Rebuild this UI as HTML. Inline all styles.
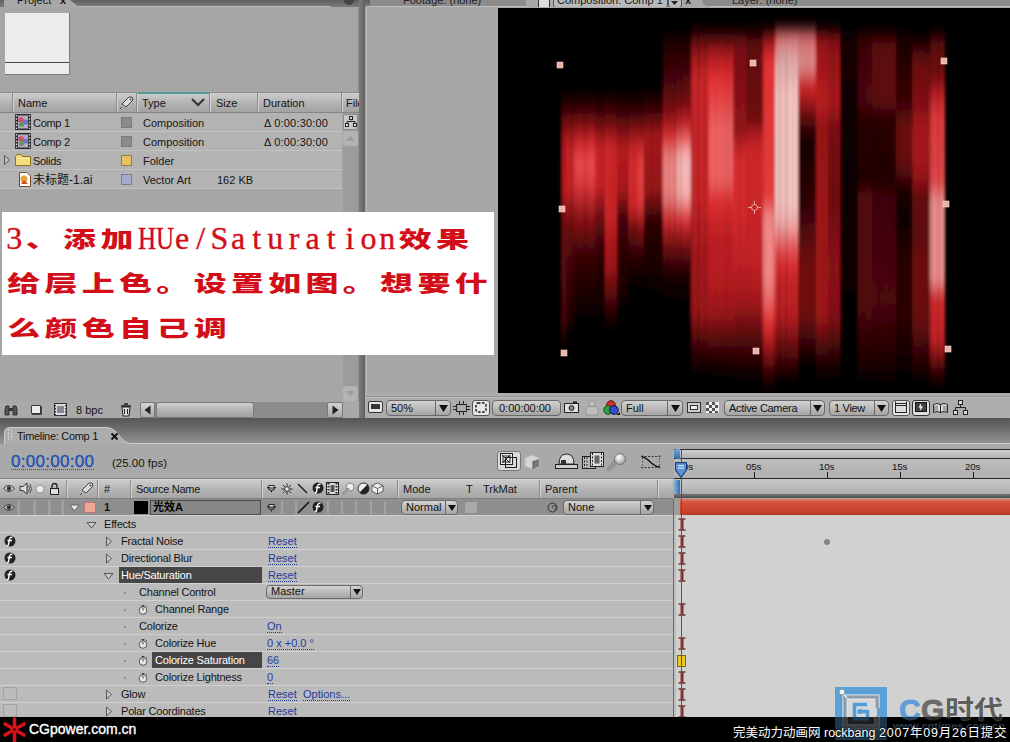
<!DOCTYPE html>
<html><head><meta charset="utf-8"><title>AE</title>
<style>
html,body{margin:0;padding:0;}
body{width:1010px;height:742px;overflow:hidden;position:relative;background:#a6a6a6;font-family:"Liberation Sans","Noto Sans CJK SC",sans-serif;font-size:11px;color:#111;}
.a{position:absolute;}
.t{position:absolute;white-space:nowrap;line-height:14px;font-size:11px;color:#151515;}
.lnk{color:#1a3fa8;border-bottom:1px dotted #1a3fa8;line-height:12px;}
.row{position:absolute;left:0;width:676px;height:16px;background:#b7b7b7;border-bottom:1px solid #a2a2a2;}
</style></head><body>


<!-- ===== top tab strip ===== -->
<div class="a" style="left:0;top:0;width:1010px;height:7px;background:linear-gradient(#606060,#7c7c7c);"></div>
<div class="a" style="left:4px;top:0;width:66px;height:7px;background:#a8a8a8;overflow:hidden;"><span class="t" style="left:13px;top:-7px;font-size:11px;">Project</span><span class="t" style="left:56px;top:-7px;font-weight:bold;">x</span></div>
<div class="a" style="left:70px;top:0;width:0;height:0;border-top:7px solid transparent;border-left:9px solid #a8a8a8;"></div>
<div class="a" style="left:78px;top:6px;width:252px;height:1px;background:#bdbdbd;"></div>
<div class="a" style="left:344px;top:-5px;width:10px;height:10px;border-radius:5px;background:#444;"></div>

<!-- ===== project panel ===== -->
<div class="a" id="proj" style="left:0;top:7px;width:359px;height:412px;background:#a6a6a6;"></div>
<div class="a" style="left:359px;top:0;width:6px;height:425px;background:linear-gradient(90deg,#7c7c7c,#626262);"></div>
<div class="a" style="left:358px;top:8px;width:1px;height:411px;background:#8e8e8e;"></div>

<!-- thumbnail -->
<div class="a" style="left:5px;top:13px;width:65px;height:62px;background:#ececec;border-right:1px solid #7d7d7d;border-bottom:1px solid #7d7d7d;box-sizing:border-box;"></div>
<div class="a" style="left:5px;top:62px;width:64px;height:1px;background:#4a4a4a;"></div>

<!-- header row -->
<div class="a" id="phead" style="left:0;top:92px;width:359px;height:21px;background:linear-gradient(#cdcdcd,#b0b0b0 60%,#a3a3a3);border-top:1px solid #8f8f8f;border-bottom:1px solid #858585;box-sizing:border-box;"></div>
<div class="a" style="left:12px;top:93px;width:1px;height:19px;background:#8a8a8a;"></div><div class="a" style="left:13px;top:93px;width:1px;height:19px;background:#d2d2d2;"></div>
<div class="a" style="left:116px;top:93px;width:1px;height:19px;background:#8a8a8a;"></div><div class="a" style="left:117px;top:93px;width:1px;height:19px;background:#d2d2d2;"></div>
<div class="a" style="left:136px;top:93px;width:1px;height:19px;background:#8a8a8a;"></div><div class="a" style="left:137px;top:93px;width:1px;height:19px;background:#d2d2d2;"></div>
<div class="a" style="left:138px;top:92px;width:72px;height:2px;background:#4f9a96;"></div>
<div class="a" style="left:209px;top:93px;width:1px;height:19px;background:#8a8a8a;"></div><div class="a" style="left:210px;top:93px;width:1px;height:19px;background:#d2d2d2;"></div>
<div class="a" style="left:257px;top:93px;width:1px;height:19px;background:#8a8a8a;"></div><div class="a" style="left:258px;top:93px;width:1px;height:19px;background:#d2d2d2;"></div>
<div class="a" style="left:341px;top:93px;width:1px;height:19px;background:#8a8a8a;"></div><div class="a" style="left:342px;top:93px;width:1px;height:19px;background:#d2d2d2;"></div>
<span class="t" style="left:18px;top:96px;">Name</span>
<span class="t" style="left:142px;top:96px;">Type</span>
<span class="t" style="left:216px;top:96px;">Size</span>
<span class="t" style="left:263px;top:96px;">Duration</span>
<span class="t" style="left:346px;top:96px;width:13px;overflow:hidden;">File</span>
<svg class="a" style="left:190px;top:97px" width="16" height="10" viewBox="0 0 16 10"><path d="M2 2 L8 8 L14 2" fill="none" stroke="#333" stroke-width="2"/></svg>
<svg class="a" style="left:119px;top:94px" width="17" height="17" viewBox="0 0 17 17"><path d="M3 10 L10 3 L13 3 L14 6 L7 13 Z" fill="#ddd" stroke="#444" stroke-width="1"/><circle cx="11.500" cy="5.500" r="1" fill="#444"/><path d="M3 13 L1 15" stroke="#444"/></svg>

<!-- rows -->
<div class="a" style="left:0;top:113px;width:342px;height:76px;background:#b3b3b3;"></div>
<div class="a" style="left:0;top:131px;width:342px;height:1px;background:#c3c3c3;"></div>
<div class="a" style="left:0;top:150px;width:342px;height:1px;background:#c3c3c3;"></div>
<div class="a" style="left:0;top:169px;width:342px;height:1px;background:#c3c3c3;"></div>
<div class="a" style="left:0;top:188px;width:342px;height:1px;background:#c3c3c3;"></div>
<!-- comp icons -->
<svg class="a" style="left:15px;top:114px" width="16" height="16" viewBox="0 0 16 16"><rect x="0" y="0" width="16" height="16" fill="#2c2c2c"/><rect x="3" y="1.500" width="10" height="13" fill="#b9a9c6"/><circle cx="6" cy="6" r="2.800" fill="#d0506a"/><circle cx="10.500" cy="8" r="2.600" fill="#6a78c8"/><circle cx="6.500" cy="10.500" r="2.500" fill="#5a9a58"/><path d="M1.500 1v14M14.500 1v14" stroke="#d8d8d8" stroke-width="1.400" stroke-dasharray="1.600 1.600"/></svg>
<svg class="a" style="left:15px;top:133px" width="16" height="16" viewBox="0 0 16 16"><rect x="0" y="0" width="16" height="16" fill="#2c2c2c"/><rect x="3" y="1.500" width="10" height="13" fill="#b9a9c6"/><circle cx="6" cy="6" r="2.800" fill="#d0506a"/><circle cx="10.500" cy="8" r="2.600" fill="#6a78c8"/><circle cx="6.500" cy="10.500" r="2.500" fill="#5a9a58"/><path d="M1.500 1v14M14.500 1v14" stroke="#d8d8d8" stroke-width="1.400" stroke-dasharray="1.600 1.600"/></svg>
<svg class="a" style="left:3px;top:154px" width="8" height="12" viewBox="0 0 8 12"><path d="M1.500 1.500 L6.500 6 L1.500 10.500 Z" fill="#c4c4c4" stroke="#555"/></svg>
<svg class="a" style="left:15px;top:153px" width="16" height="14" viewBox="0 0 16 14"><path d="M0.500 3.500 L2 1.500 L6 1.500 L7.500 3.500 L15.500 3.500 L15.500 12.500 L0.500 12.500 Z" fill="#f3dc7a" stroke="#8a7420"/><path d="M1.500 5.500 H14.500" stroke="#fbf0b0"/></svg>
<svg class="a" style="left:17px;top:171px" width="15" height="17" viewBox="0 0 15 17"><path d="M2.500 1.500 H10 L13.500 5 V15.500 H2.500 Z" fill="#fff" stroke="#7a4a20"/><circle cx="7" cy="8" r="3.500" fill="#e8a040"/><path d="M4 13 L7 9 L11 13Z" fill="#c8501c"/></svg>
<span class="t" style="left:33px;top:116px;letter-spacing:-0.3px;">Comp 1</span>
<span class="t" style="left:33px;top:135px;letter-spacing:-0.3px;">Comp 2</span>
<span class="t" style="left:33px;top:154px;letter-spacing:-0.3px;">Solids</span>
<span class="t" style="left:33px;top:173px;font-size:12px;">未标题-1.ai</span>
<div class="a" style="left:121px;top:117px;width:11px;height:11px;background:#8a8a8a;border:1px solid #7a7a7a;box-sizing:border-box;"></div>
<div class="a" style="left:121px;top:136px;width:11px;height:11px;background:#8a8a8a;border:1px solid #7a7a7a;box-sizing:border-box;"></div>
<div class="a" style="left:121px;top:155px;width:11px;height:11px;background:#e8c060;border:1px solid #8f7d4a;box-sizing:border-box;"></div>
<div class="a" style="left:121px;top:174px;width:11px;height:11px;background:#a8aacc;border:1px solid #7c7e96;box-sizing:border-box;"></div>
<span class="t" style="left:143px;top:116px;">Composition</span>
<span class="t" style="left:143px;top:135px;">Composition</span>
<span class="t" style="left:143px;top:154px;">Folder</span>
<span class="t" style="left:143px;top:173px;">Vector Art</span>
<span class="t" style="left:217px;top:173px;">162 KB</span>
<span class="t" style="left:264px;top:116px;letter-spacing:0.2px;">Δ 0:00:30:00</span>
<span class="t" style="left:264px;top:135px;letter-spacing:0.2px;">Δ 0:00:30:00</span>
<!-- vertical scrollbar of project -->
<div class="a" style="left:343px;top:113px;width:15px;height:288px;background:#9c9c9c;"></div>
<div class="a" style="left:343px;top:114px;width:15px;height:16px;background:#c9c9c9;border:1px solid #8a8a8a;box-sizing:border-box;border-radius:2px;"></div>
<svg class="a" style="left:345px;top:116px" width="12" height="12" viewBox="0 0 12 12"><path d="M6 1.500v3M2 8V5.500h8V8" fill="none" stroke="#222"/><rect x="4.500" y="0.500" width="3" height="3" fill="#ddd" stroke="#222"/><rect x="0.500" y="7.500" width="3" height="3" fill="#ddd" stroke="#222"/><rect x="8.500" y="7.500" width="3" height="3" fill="#ddd" stroke="#222"/></svg>
<div class="a" style="left:343px;top:131px;width:15px;height:15px;background:#b3b3b3;border-radius:2px;"></div>
<svg class="a" style="left:346px;top:135px" width="9" height="7" viewBox="0 0 9 7"><path d="M0.500 6 L4.500 0.500 L8.500 6 Z" fill="#9d9d9d"/></svg>
<div class="a" style="left:343px;top:386px;width:15px;height:15px;background:#b3b3b3;border-radius:2px;"></div>
<svg class="a" style="left:346px;top:390px" width="9" height="7" viewBox="0 0 9 7"><path d="M0.500 1 L4.500 6.500 L8.500 1 Z" fill="#9d9d9d"/></svg>

<!-- project footer -->
<div class="a" style="left:0;top:401px;width:359px;height:18px;background:#a9a9a9;"></div>
<svg class="a" style="left:4px;top:403px" width="14" height="14" viewBox="0 0 14 14"><path d="M2 3h3v9H1V6zM9 3h3l1 3v6H9z" fill="#555" stroke="#222" stroke-width="0.800"/><rect x="5" y="5" width="4" height="3" fill="#333"/></svg>
<div class="a" style="left:31px;top:405px;width:10px;height:9px;background:#eee;border:1px solid #333;border-radius:1px;box-sizing:border-box;box-shadow:1px 1px 0 #444;"></div>
<svg class="a" style="left:54px;top:403px" width="13" height="13" viewBox="0 0 13 13"><rect x="0.500" y="0.500" width="12" height="12" fill="#ddd" stroke="#333"/><rect x="3" y="3" width="7" height="7" fill="#889"/><path d="M1.500 2v10M11.500 2v10" stroke="#333" stroke-dasharray="1.500 1.500"/></svg>
<span class="t" style="left:76px;top:403px;">8 bpc</span>
<svg class="a" style="left:120px;top:402px" width="12" height="15" viewBox="0 0 12 15"><path d="M2 5h8l-1 9H3z" fill="#ddd" stroke="#222"/><path d="M1 4h10M4 2h4" stroke="#222" stroke-width="1.500"/><path d="M4.500 7v5M7.500 7v5" stroke="#222"/></svg>
<div class="a" style="left:140px;top:402px;width:203px;height:16px;background:#8c8c8c;border-radius:2px;"></div>
<div class="a" style="left:140px;top:402px;width:15px;height:16px;background:linear-gradient(#d4d4d4,#aaa);border:1px solid #777;box-sizing:border-box;border-radius:2px;"></div>
<div class="a" style="left:327px;top:402px;width:16px;height:16px;background:linear-gradient(#d4d4d4,#aaa);border:1px solid #777;box-sizing:border-box;border-radius:2px;"></div>
<div class="a" style="left:156px;top:402px;width:98px;height:16px;background:linear-gradient(#d0d0d0,#b4b4b4 50%,#a2a2a2);border:1px solid #7c7c7c;box-sizing:border-box;border-radius:3px;"></div>
<svg class="a" style="left:143px;top:405px" width="9" height="10" viewBox="0 0 9 10"><path d="M7.500 0.500 L1.500 5 L7.500 9.500 Z" fill="#222"/></svg>
<svg class="a" style="left:331px;top:405px" width="9" height="10" viewBox="0 0 9 10"><path d="M1.500 0.500 L7.500 5 L1.500 9.500 Z" fill="#222"/></svg>

<!-- ===== comp panel ===== -->
<div class="a" id="compgray" style="left:365px;top:8px;width:645px;height:411px;background:#a7a7a7;"></div>
<div class="a" style="left:366px;top:8px;width:1px;height:411px;background:#b5b5b5;"></div>
<div class="a" style="left:365px;top:393px;width:645px;height:25px;background:#adadad;"></div><div class="a" style="left:365px;top:396px;width:645px;height:1px;background:#969696;"></div><div class="a" style="left:365px;top:397px;width:645px;height:1px;background:#bcbcbc;"></div>
<!--VIEWER_S-->
<svg class="a" id="viewer" style="left:498px;top:8px" width="512" height="385" viewBox="498 8 512 385">
<defs><filter id="bx" x="-5%" y="-5%" width="110%" height="110%"><feGaussianBlur stdDeviation="1.5 7"/></filter>
<linearGradient id="g0" x1="0" y1="92" x2="0" y2="350" gradientUnits="userSpaceOnUse"><stop offset="0.000" stop-color="rgb(0,0,0)"/><stop offset="0.070" stop-color="rgb(58,4,6)"/><stop offset="0.140" stop-color="rgb(125,14,18)"/><stop offset="0.205" stop-color="rgb(169,24,28)"/><stop offset="0.380" stop-color="rgb(180,26,30)"/><stop offset="0.516" stop-color="rgb(98,10,13)"/><stop offset="0.884" stop-color="rgb(71,6,8)"/><stop offset="1.000" stop-color="rgb(0,0,0)"/></linearGradient>
<linearGradient id="g1" x1="0" y1="92" x2="0" y2="335" gradientUnits="userSpaceOnUse"><stop offset="0.000" stop-color="rgb(0,0,0)"/><stop offset="0.074" stop-color="rgb(58,4,6)"/><stop offset="0.148" stop-color="rgb(136,16,20)"/><stop offset="0.230" stop-color="rgb(198,35,38)"/><stop offset="0.403" stop-color="rgb(198,35,38)"/><stop offset="0.547" stop-color="rgb(112,12,16)"/><stop offset="0.691" stop-color="rgb(71,6,8)"/><stop offset="0.922" stop-color="rgb(35,2,4)"/><stop offset="1.000" stop-color="rgb(0,0,0)"/></linearGradient>
<linearGradient id="g2" x1="0" y1="90" x2="0" y2="320" gradientUnits="userSpaceOnUse"><stop offset="0.000" stop-color="rgb(0,0,0)"/><stop offset="0.087" stop-color="rgb(58,4,6)"/><stop offset="0.165" stop-color="rgb(147,19,23)"/><stop offset="0.252" stop-color="rgb(226,48,50)"/><stop offset="0.313" stop-color="rgb(232,78,79)"/><stop offset="0.396" stop-color="rgb(228,60,62)"/><stop offset="0.570" stop-color="rgb(136,16,20)"/><stop offset="0.717" stop-color="rgb(58,4,6)"/><stop offset="0.913" stop-color="rgb(23,2,2)"/><stop offset="1.000" stop-color="rgb(0,0,0)"/></linearGradient>
<linearGradient id="g3" x1="0" y1="90" x2="0" y2="320" gradientUnits="userSpaceOnUse"><stop offset="0.000" stop-color="rgb(0,0,0)"/><stop offset="0.087" stop-color="rgb(46,3,5)"/><stop offset="0.165" stop-color="rgb(125,14,18)"/><stop offset="0.252" stop-color="rgb(198,35,38)"/><stop offset="0.413" stop-color="rgb(198,35,38)"/><stop offset="0.570" stop-color="rgb(98,10,13)"/><stop offset="0.717" stop-color="rgb(46,3,5)"/><stop offset="0.913" stop-color="rgb(19,1,2)"/><stop offset="1.000" stop-color="rgb(0,0,0)"/></linearGradient>
<linearGradient id="g4" x1="0" y1="90" x2="0" y2="330" gradientUnits="userSpaceOnUse"><stop offset="0.000" stop-color="rgb(0,0,0)"/><stop offset="0.083" stop-color="rgb(58,4,6)"/><stop offset="0.158" stop-color="rgb(136,16,20)"/><stop offset="0.233" stop-color="rgb(208,39,42)"/><stop offset="0.521" stop-color="rgb(208,39,42)"/><stop offset="0.625" stop-color="rgb(180,26,30)"/><stop offset="0.746" stop-color="rgb(158,21,25)"/><stop offset="0.883" stop-color="rgb(71,6,8)"/><stop offset="1.000" stop-color="rgb(0,0,0)"/></linearGradient>
<linearGradient id="g5" x1="0" y1="90" x2="0" y2="310" gradientUnits="userSpaceOnUse"><stop offset="0.000" stop-color="rgb(0,0,0)"/><stop offset="0.091" stop-color="rgb(46,3,5)"/><stop offset="0.173" stop-color="rgb(112,12,16)"/><stop offset="0.264" stop-color="rgb(180,26,30)"/><stop offset="0.455" stop-color="rgb(169,24,28)"/><stop offset="0.568" stop-color="rgb(71,6,8)"/><stop offset="0.727" stop-color="rgb(46,3,5)"/><stop offset="0.909" stop-color="rgb(28,2,3)"/><stop offset="1.000" stop-color="rgb(0,0,0)"/></linearGradient>
<linearGradient id="g6" x1="0" y1="90" x2="0" y2="290" gradientUnits="userSpaceOnUse"><stop offset="0.000" stop-color="rgb(0,0,0)"/><stop offset="0.100" stop-color="rgb(46,3,5)"/><stop offset="0.190" stop-color="rgb(125,14,18)"/><stop offset="0.280" stop-color="rgb(198,35,38)"/><stop offset="0.370" stop-color="rgb(217,44,46)"/><stop offset="0.590" stop-color="rgb(208,39,42)"/><stop offset="0.675" stop-color="rgb(125,14,18)"/><stop offset="0.825" stop-color="rgb(46,3,5)"/><stop offset="1.000" stop-color="rgb(0,0,0)"/></linearGradient>
<linearGradient id="g7" x1="0" y1="90" x2="0" y2="290" gradientUnits="userSpaceOnUse"><stop offset="0.000" stop-color="rgb(0,0,0)"/><stop offset="0.100" stop-color="rgb(46,3,5)"/><stop offset="0.190" stop-color="rgb(125,14,18)"/><stop offset="0.280" stop-color="rgb(208,39,42)"/><stop offset="0.375" stop-color="rgb(230,68,69)"/><stop offset="0.575" stop-color="rgb(228,60,62)"/><stop offset="0.675" stop-color="rgb(147,19,23)"/><stop offset="0.825" stop-color="rgb(46,3,5)"/><stop offset="1.000" stop-color="rgb(0,0,0)"/></linearGradient>
<linearGradient id="g8" x1="0" y1="88" x2="0" y2="300" gradientUnits="userSpaceOnUse"><stop offset="0.000" stop-color="rgb(0,0,0)"/><stop offset="0.104" stop-color="rgb(58,4,6)"/><stop offset="0.222" stop-color="rgb(169,24,28)"/><stop offset="0.481" stop-color="rgb(156,21,25)"/><stop offset="0.627" stop-color="rgb(46,3,5)"/><stop offset="0.811" stop-color="rgb(28,2,3)"/><stop offset="1.000" stop-color="rgb(0,0,0)"/></linearGradient>
<linearGradient id="g9" x1="0" y1="30" x2="0" y2="320" gradientUnits="userSpaceOnUse"><stop offset="0.000" stop-color="rgb(0,0,0)"/><stop offset="0.052" stop-color="rgb(35,2,4)"/><stop offset="0.172" stop-color="rgb(71,6,8)"/><stop offset="0.259" stop-color="rgb(112,12,16)"/><stop offset="0.317" stop-color="rgb(169,24,28)"/><stop offset="0.369" stop-color="rgb(226,48,50)"/><stop offset="0.438" stop-color="rgb(241,134,133)"/><stop offset="0.569" stop-color="rgb(241,134,133)"/><stop offset="0.659" stop-color="rgb(208,39,42)"/><stop offset="0.776" stop-color="rgb(85,8,11)"/><stop offset="0.869" stop-color="rgb(12,1,1)"/><stop offset="1.000" stop-color="rgb(0,0,0)"/></linearGradient>
<linearGradient id="g10" x1="0" y1="30" x2="0" y2="320" gradientUnits="userSpaceOnUse"><stop offset="0.000" stop-color="rgb(0,0,0)"/><stop offset="0.052" stop-color="rgb(35,2,4)"/><stop offset="0.172" stop-color="rgb(77,7,9)"/><stop offset="0.259" stop-color="rgb(125,14,18)"/><stop offset="0.317" stop-color="rgb(189,30,34)"/><stop offset="0.369" stop-color="rgb(233,85,86)"/><stop offset="0.438" stop-color="rgb(247,185,183)"/><stop offset="0.569" stop-color="rgb(247,178,175)"/><stop offset="0.659" stop-color="rgb(217,44,46)"/><stop offset="0.776" stop-color="rgb(85,8,11)"/><stop offset="0.869" stop-color="rgb(12,1,1)"/><stop offset="1.000" stop-color="rgb(0,0,0)"/></linearGradient>
<linearGradient id="g11" x1="0" y1="26" x2="0" y2="374" gradientUnits="userSpaceOnUse"><stop offset="0.000" stop-color="rgb(0,0,0)"/><stop offset="0.078" stop-color="rgb(158,21,25)"/><stop offset="0.152" stop-color="rgb(208,39,42)"/><stop offset="0.500" stop-color="rgb(204,37,40)"/><stop offset="0.647" stop-color="rgb(169,24,28)"/><stop offset="0.830" stop-color="rgb(158,21,25)"/><stop offset="0.911" stop-color="rgb(71,6,8)"/><stop offset="1.000" stop-color="rgb(0,0,0)"/></linearGradient>
<linearGradient id="g12" x1="0" y1="28" x2="0" y2="378" gradientUnits="userSpaceOnUse"><stop offset="0.000" stop-color="rgb(0,0,0)"/><stop offset="0.071" stop-color="rgb(169,24,28)"/><stop offset="0.146" stop-color="rgb(226,48,50)"/><stop offset="0.291" stop-color="rgb(236,98,98)"/><stop offset="0.437" stop-color="rgb(236,98,98)"/><stop offset="0.491" stop-color="rgb(222,46,48)"/><stop offset="0.600" stop-color="rgb(189,30,34)"/><stop offset="0.711" stop-color="rgb(186,29,32)"/><stop offset="0.820" stop-color="rgb(151,20,24)"/><stop offset="0.931" stop-color="rgb(46,3,5)"/><stop offset="1.000" stop-color="rgb(0,0,0)"/></linearGradient>
<linearGradient id="g13" x1="0" y1="28" x2="0" y2="380" gradientUnits="userSpaceOnUse"><stop offset="0.000" stop-color="rgb(0,0,0)"/><stop offset="0.048" stop-color="rgb(125,14,18)"/><stop offset="0.290" stop-color="rgb(147,19,23)"/><stop offset="0.364" stop-color="rgb(217,44,46)"/><stop offset="0.503" stop-color="rgb(217,44,46)"/><stop offset="0.670" stop-color="rgb(193,32,36)"/><stop offset="0.778" stop-color="rgb(165,23,27)"/><stop offset="0.926" stop-color="rgb(51,4,5)"/><stop offset="1.000" stop-color="rgb(0,0,0)"/></linearGradient>
<linearGradient id="g14" x1="0" y1="28" x2="0" y2="380" gradientUnits="userSpaceOnUse"><stop offset="0.000" stop-color="rgb(0,0,0)"/><stop offset="0.048" stop-color="rgb(98,10,13)"/><stop offset="0.267" stop-color="rgb(112,12,16)"/><stop offset="0.290" stop-color="rgb(165,23,27)"/><stop offset="0.341" stop-color="rgb(204,37,40)"/><stop offset="0.503" stop-color="rgb(204,37,40)"/><stop offset="0.670" stop-color="rgb(193,32,36)"/><stop offset="0.778" stop-color="rgb(165,23,27)"/><stop offset="0.926" stop-color="rgb(51,4,5)"/><stop offset="1.000" stop-color="rgb(0,0,0)"/></linearGradient>
<linearGradient id="g15" x1="0" y1="28" x2="0" y2="388" gradientUnits="userSpaceOnUse"><stop offset="0.000" stop-color="rgb(0,0,0)"/><stop offset="0.033" stop-color="rgb(147,19,23)"/><stop offset="0.089" stop-color="rgb(226,48,50)"/><stop offset="0.478" stop-color="rgb(228,60,62)"/><stop offset="0.519" stop-color="rgb(241,134,133)"/><stop offset="0.692" stop-color="rgb(241,134,133)"/><stop offset="0.761" stop-color="rgb(236,98,98)"/><stop offset="0.819" stop-color="rgb(226,48,50)"/><stop offset="0.881" stop-color="rgb(169,24,28)"/><stop offset="0.944" stop-color="rgb(71,6,8)"/><stop offset="1.000" stop-color="rgb(0,0,0)"/></linearGradient>
<linearGradient id="g16" x1="0" y1="26" x2="0" y2="380" gradientUnits="userSpaceOnUse"><stop offset="0.000" stop-color="rgb(0,0,0)"/><stop offset="0.028" stop-color="rgb(226,48,50)"/><stop offset="0.096" stop-color="rgb(244,158,156)"/><stop offset="0.186" stop-color="rgb(249,200,197)"/><stop offset="0.506" stop-color="rgb(249,200,197)"/><stop offset="0.562" stop-color="rgb(246,170,168)"/><stop offset="0.619" stop-color="rgb(236,98,98)"/><stop offset="0.667" stop-color="rgb(226,48,50)"/><stop offset="0.732" stop-color="rgb(198,35,38)"/><stop offset="0.816" stop-color="rgb(189,30,34)"/><stop offset="0.941" stop-color="rgb(71,6,8)"/><stop offset="1.000" stop-color="rgb(0,0,0)"/></linearGradient>
<linearGradient id="g17" x1="0" y1="26" x2="0" y2="366" gradientUnits="userSpaceOnUse"><stop offset="0.000" stop-color="rgb(0,0,0)"/><stop offset="0.029" stop-color="rgb(208,39,42)"/><stop offset="0.118" stop-color="rgb(238,110,110)"/><stop offset="0.132" stop-color="rgb(217,44,46)"/><stop offset="0.194" stop-color="rgb(198,35,38)"/><stop offset="0.268" stop-color="rgb(98,10,13)"/><stop offset="0.329" stop-color="rgb(23,2,2)"/><stop offset="0.512" stop-color="rgb(46,3,5)"/><stop offset="0.688" stop-color="rgb(112,12,16)"/><stop offset="0.850" stop-color="rgb(112,12,16)"/><stop offset="1.000" stop-color="rgb(0,0,0)"/></linearGradient>
<linearGradient id="g18" x1="0" y1="28" x2="0" y2="380" gradientUnits="userSpaceOnUse"><stop offset="0.000" stop-color="rgb(0,0,0)"/><stop offset="0.034" stop-color="rgb(147,19,23)"/><stop offset="0.205" stop-color="rgb(186,29,32)"/><stop offset="0.290" stop-color="rgb(147,19,23)"/><stop offset="0.489" stop-color="rgb(158,21,25)"/><stop offset="0.815" stop-color="rgb(158,21,25)"/><stop offset="0.960" stop-color="rgb(23,2,2)"/><stop offset="1.000" stop-color="rgb(0,0,0)"/></linearGradient>
<linearGradient id="g19" x1="0" y1="28" x2="0" y2="380" gradientUnits="userSpaceOnUse"><stop offset="0.000" stop-color="rgb(0,0,0)"/><stop offset="0.034" stop-color="rgb(136,16,20)"/><stop offset="0.205" stop-color="rgb(173,25,29)"/><stop offset="0.290" stop-color="rgb(125,14,18)"/><stop offset="0.489" stop-color="rgb(112,12,16)"/><stop offset="0.670" stop-color="rgb(143,18,22)"/><stop offset="0.815" stop-color="rgb(136,16,20)"/><stop offset="0.960" stop-color="rgb(23,2,2)"/><stop offset="1.000" stop-color="rgb(0,0,0)"/></linearGradient>
<linearGradient id="g20" x1="0" y1="28" x2="0" y2="380" gradientUnits="userSpaceOnUse"><stop offset="0.000" stop-color="rgb(0,0,0)"/><stop offset="0.034" stop-color="rgb(19,1,2)"/><stop offset="0.489" stop-color="rgb(14,1,1)"/><stop offset="1.000" stop-color="rgb(0,0,0)"/></linearGradient>
<linearGradient id="g21" x1="0" y1="30" x2="0" y2="384" gradientUnits="userSpaceOnUse"><stop offset="0.000" stop-color="rgb(0,0,0)"/><stop offset="0.028" stop-color="rgb(58,4,6)"/><stop offset="0.198" stop-color="rgb(79,7,10)"/><stop offset="0.246" stop-color="rgb(42,3,4)"/><stop offset="0.435" stop-color="rgb(32,2,3)"/><stop offset="0.463" stop-color="rgb(82,8,10)"/><stop offset="0.768" stop-color="rgb(82,8,10)"/><stop offset="0.955" stop-color="rgb(23,2,2)"/><stop offset="1.000" stop-color="rgb(0,0,0)"/></linearGradient>
<linearGradient id="g22" x1="0" y1="30" x2="0" y2="384" gradientUnits="userSpaceOnUse"><stop offset="0.000" stop-color="rgb(0,0,0)"/><stop offset="0.028" stop-color="rgb(66,5,7)"/><stop offset="0.045" stop-color="rgb(93,9,12)"/><stop offset="0.203" stop-color="rgb(98,10,13)"/><stop offset="0.246" stop-color="rgb(42,3,4)"/><stop offset="0.435" stop-color="rgb(32,2,3)"/><stop offset="0.463" stop-color="rgb(63,5,7)"/><stop offset="0.768" stop-color="rgb(77,7,9)"/><stop offset="0.955" stop-color="rgb(23,2,2)"/><stop offset="1.000" stop-color="rgb(0,0,0)"/></linearGradient>
<linearGradient id="g23" x1="0" y1="30" x2="0" y2="380" gradientUnits="userSpaceOnUse"><stop offset="0.000" stop-color="rgb(0,0,0)"/><stop offset="0.029" stop-color="rgb(28,2,3)"/><stop offset="0.200" stop-color="rgb(58,4,6)"/><stop offset="0.286" stop-color="rgb(112,12,16)"/><stop offset="0.386" stop-color="rgb(104,11,14)"/><stop offset="0.457" stop-color="rgb(28,2,3)"/><stop offset="0.543" stop-color="rgb(12,1,1)"/><stop offset="0.657" stop-color="rgb(42,3,4)"/><stop offset="0.829" stop-color="rgb(42,3,4)"/><stop offset="1.000" stop-color="rgb(0,0,0)"/></linearGradient>
<linearGradient id="g24" x1="0" y1="35" x2="0" y2="382" gradientUnits="userSpaceOnUse"><stop offset="0.000" stop-color="rgb(0,0,0)"/><stop offset="0.061" stop-color="rgb(85,8,11)"/><stop offset="0.101" stop-color="rgb(112,12,16)"/><stop offset="0.187" stop-color="rgb(125,14,18)"/><stop offset="0.274" stop-color="rgb(165,23,27)"/><stop offset="0.360" stop-color="rgb(165,23,27)"/><stop offset="0.429" stop-color="rgb(136,16,20)"/><stop offset="0.458" stop-color="rgb(98,10,13)"/><stop offset="0.605" stop-color="rgb(93,9,12)"/><stop offset="0.648" stop-color="rgb(109,12,15)"/><stop offset="0.827" stop-color="rgb(104,11,14)"/><stop offset="0.960" stop-color="rgb(28,2,3)"/><stop offset="1.000" stop-color="rgb(0,0,0)"/></linearGradient>
<linearGradient id="g25" x1="0" y1="30" x2="0" y2="384" gradientUnits="userSpaceOnUse"><stop offset="0.000" stop-color="rgb(0,0,0)"/><stop offset="0.042" stop-color="rgb(98,10,13)"/><stop offset="0.141" stop-color="rgb(125,14,18)"/><stop offset="0.175" stop-color="rgb(189,30,34)"/><stop offset="0.246" stop-color="rgb(228,60,62)"/><stop offset="0.435" stop-color="rgb(231,73,74)"/><stop offset="0.480" stop-color="rgb(243,146,145)"/><stop offset="0.709" stop-color="rgb(243,146,145)"/><stop offset="0.751" stop-color="rgb(217,44,46)"/><stop offset="0.881" stop-color="rgb(198,35,38)"/><stop offset="0.955" stop-color="rgb(71,6,8)"/><stop offset="1.000" stop-color="rgb(0,0,0)"/></linearGradient>
</defs>
<rect x="498" y="8" width="512" height="385" fill="#000"/>
<g filter="url(#bx)">
<rect x="561" y="92" width="5" height="258" fill="url(#g0)"/>
<rect x="566" y="92" width="8" height="243" fill="url(#g1)"/>
<rect x="574" y="90" width="21" height="230" fill="url(#g2)"/>
<rect x="595" y="90" width="10" height="230" fill="url(#g3)"/>
<rect x="605" y="90" width="12" height="240" fill="url(#g4)"/>
<rect x="617" y="90" width="11" height="220" fill="url(#g5)"/>
<rect x="628" y="90" width="10" height="200" fill="url(#g6)"/>
<rect x="638" y="90" width="6" height="200" fill="url(#g7)"/>
<rect x="644" y="88" width="19" height="212" fill="url(#g8)"/>
<rect x="663" y="30" width="14" height="290" fill="url(#g9)"/>
<rect x="677" y="30" width="14" height="290" fill="url(#g10)"/>
<rect x="691" y="26" width="18" height="348" fill="url(#g11)"/>
<rect x="709" y="28" width="24" height="350" fill="url(#g12)"/>
<rect x="733" y="28" width="13" height="352" fill="url(#g13)"/>
<rect x="746" y="28" width="17" height="352" fill="url(#g14)"/>
<rect x="763" y="28" width="12" height="360" fill="url(#g15)"/>
<rect x="775" y="26" width="23" height="354" fill="url(#g16)"/>
<rect x="798" y="26" width="18" height="340" fill="url(#g17)"/>
<rect x="816" y="28" width="12" height="352" fill="url(#g18)"/>
<rect x="828" y="28" width="12" height="352" fill="url(#g19)"/>
<rect x="840" y="28" width="18" height="352" fill="url(#g20)"/>
<rect x="858" y="30" width="14" height="354" fill="url(#g21)"/>
<rect x="872" y="30" width="24" height="354" fill="url(#g22)"/>
<rect x="896" y="30" width="16" height="350" fill="url(#g23)"/>
<rect x="912" y="35" width="18" height="347" fill="url(#g24)"/>
<rect x="930" y="30" width="15" height="354" fill="url(#g25)"/>
<rect x="562" y="25" width="2" height="365" fill="#000" opacity="0.05"/>
<rect x="570" y="25" width="2" height="365" fill="#000" opacity="0.14"/>
<rect x="573" y="25" width="3" height="365" fill="#000" opacity="0.05"/>
<rect x="577" y="25" width="1" height="365" fill="#000" opacity="0.11"/>
<rect x="582" y="25" width="1" height="365" fill="#000" opacity="0.05"/>
<rect x="584" y="25" width="3" height="365" fill="#000" opacity="0.11"/>
<rect x="600" y="25" width="1" height="365" fill="#000" opacity="0.05"/>
<rect x="602" y="25" width="3" height="365" fill="#000" opacity="0.05"/>
<rect x="608" y="25" width="2" height="365" fill="#000" opacity="0.05"/>
<rect x="611" y="25" width="3" height="365" fill="#000" opacity="0.08"/>
<rect x="616" y="25" width="1" height="365" fill="#000" opacity="0.14"/>
<rect x="627" y="25" width="2" height="365" fill="#000" opacity="0.18"/>
<rect x="633" y="25" width="2" height="365" fill="#000" opacity="0.11"/>
<rect x="639" y="25" width="2" height="365" fill="#000" opacity="0.08"/>
<rect x="643" y="25" width="1" height="365" fill="#000" opacity="0.18"/>
<rect x="646" y="25" width="1" height="365" fill="#000" opacity="0.14"/>
<rect x="650" y="25" width="3" height="365" fill="#000" opacity="0.11"/>
<rect x="656" y="25" width="2" height="365" fill="#000" opacity="0.08"/>
<rect x="659" y="25" width="1" height="365" fill="#000" opacity="0.14"/>
<rect x="664" y="25" width="1" height="365" fill="#000" opacity="0.08"/>
<rect x="667" y="25" width="2" height="365" fill="#000" opacity="0.11"/>
<rect x="670" y="25" width="1" height="365" fill="#000" opacity="0.14"/>
<rect x="674" y="25" width="2" height="365" fill="#000" opacity="0.18"/>
<rect x="679" y="25" width="3" height="365" fill="#000" opacity="0.11"/>
<rect x="690" y="25" width="2" height="365" fill="#000" opacity="0.18"/>
<rect x="693" y="25" width="1" height="365" fill="#000" opacity="0.18"/>
<rect x="697" y="25" width="3" height="365" fill="#000" opacity="0.18"/>
<rect x="704" y="25" width="2" height="365" fill="#000" opacity="0.18"/>
<rect x="716" y="25" width="2" height="365" fill="#000" opacity="0.05"/>
<rect x="723" y="25" width="2" height="365" fill="#000" opacity="0.05"/>
<rect x="727" y="25" width="2" height="365" fill="#000" opacity="0.11"/>
<rect x="733" y="25" width="1" height="365" fill="#000" opacity="0.05"/>
<rect x="738" y="25" width="2" height="365" fill="#000" opacity="0.14"/>
<rect x="743" y="25" width="1" height="365" fill="#000" opacity="0.11"/>
<rect x="747" y="25" width="2" height="365" fill="#000" opacity="0.08"/>
<rect x="753" y="25" width="1" height="365" fill="#000" opacity="0.05"/>
<rect x="755" y="25" width="1" height="365" fill="#000" opacity="0.05"/>
<rect x="763" y="25" width="3" height="365" fill="#000" opacity="0.05"/>
<rect x="773" y="25" width="2" height="365" fill="#000" opacity="0.14"/>
<rect x="778" y="25" width="3" height="365" fill="#000" opacity="0.14"/>
<rect x="784" y="25" width="1" height="365" fill="#000" opacity="0.18"/>
<rect x="786" y="25" width="2" height="365" fill="#000" opacity="0.18"/>
<rect x="792" y="25" width="2" height="365" fill="#000" opacity="0.11"/>
<rect x="798" y="25" width="1" height="365" fill="#000" opacity="0.11"/>
<rect x="803" y="25" width="1" height="365" fill="#000" opacity="0.05"/>
<rect x="805" y="25" width="1" height="365" fill="#000" opacity="0.11"/>
<rect x="808" y="25" width="1" height="365" fill="#000" opacity="0.08"/>
<rect x="823" y="25" width="1" height="365" fill="#000" opacity="0.14"/>
<rect x="828" y="25" width="1" height="365" fill="#000" opacity="0.18"/>
<rect x="832" y="25" width="2" height="365" fill="#000" opacity="0.14"/>
<rect x="840" y="25" width="2" height="365" fill="#000" opacity="0.11"/>
<rect x="846" y="25" width="2" height="365" fill="#000" opacity="0.08"/>
<rect x="853" y="25" width="2" height="365" fill="#000" opacity="0.11"/>
<rect x="862" y="25" width="3" height="365" fill="#000" opacity="0.08"/>
<rect x="873" y="25" width="1" height="365" fill="#000" opacity="0.18"/>
<rect x="877" y="25" width="3" height="365" fill="#000" opacity="0.08"/>
<rect x="882" y="25" width="2" height="365" fill="#000" opacity="0.05"/>
<rect x="887" y="25" width="1" height="365" fill="#000" opacity="0.14"/>
<rect x="890" y="25" width="1" height="365" fill="#000" opacity="0.11"/>
<rect x="893" y="25" width="1" height="365" fill="#000" opacity="0.14"/>
<rect x="898" y="25" width="2" height="365" fill="#000" opacity="0.18"/>
<rect x="901" y="25" width="1" height="365" fill="#000" opacity="0.08"/>
<rect x="906" y="25" width="2" height="365" fill="#000" opacity="0.05"/>
<rect x="911" y="25" width="2" height="365" fill="#000" opacity="0.18"/>
<rect x="920" y="25" width="1" height="365" fill="#000" opacity="0.05"/>
<rect x="925" y="25" width="1" height="365" fill="#000" opacity="0.08"/>
<rect x="928" y="25" width="2" height="365" fill="#000" opacity="0.14"/>
<rect x="931" y="25" width="2" height="365" fill="#000" opacity="0.18"/>
<rect x="936" y="25" width="1" height="365" fill="#000" opacity="0.18"/>
<rect x="938" y="25" width="2" height="365" fill="#000" opacity="0.18"/>
<rect x="942" y="25" width="2" height="365" fill="#000" opacity="0.05"/>
<rect x="777" y="34" width="38" height="44" fill="#c9b6b6" opacity=".45"/>
</g>
<rect x="557" y="62" width="6" height="6" fill="#eab4a6" stroke="#f6d8d0" stroke-width="0.6"/>
<rect x="750" y="60" width="6" height="6" fill="#eab4a6" stroke="#f6d8d0" stroke-width="0.6"/>
<rect x="941" y="58" width="6" height="6" fill="#eab4a6" stroke="#f6d8d0" stroke-width="0.6"/>
<rect x="559" y="206" width="6" height="6" fill="#eab4a6" stroke="#f6d8d0" stroke-width="0.6"/>
<rect x="943" y="201" width="6" height="6" fill="#eab4a6" stroke="#f6d8d0" stroke-width="0.6"/>
<rect x="561" y="350" width="6" height="6" fill="#eab4a6" stroke="#f6d8d0" stroke-width="0.6"/>
<rect x="753" y="348" width="6" height="6" fill="#eab4a6" stroke="#f6d8d0" stroke-width="0.6"/>
<rect x="945" y="346" width="6" height="6" fill="#eab4a6" stroke="#f6d8d0" stroke-width="0.6"/>
<g stroke="#e8a8a0" fill="none" stroke-width="1"><circle cx="754.5" cy="207.5" r="3"/><path d="M754.5 201v4M754.5 210v4M748 207.5h4M757 207.5h4"/></g>
</svg>
<!--VIEWER_E-->

<!-- comp tabs -->
<div class="a" style="left:366px;top:0;width:644px;height:8px;overflow:hidden;">
 <div class="a" style="left:4px;top:0;width:164px;height:6px;background:#8b8b8b;border-radius:0 0 6px 0;"></div>
 <span class="t" style="left:37px;top:-7px;color:#222;">Footage: (none)</span>
 <div class="a" style="left:160px;top:0;width:184px;height:8px;background:#a8a8a8;"></div>
 <div class="a" style="left:172px;top:-4px;width:10px;height:10px;background:#ddd;border:1px solid #333;"></div>
 <div class="a" style="left:187px;top:-8px;width:113px;height:14px;background:#b9b9b9;border:1px solid #555;border-radius:3px;"></div>
 <span class="t" style="left:191px;top:-7px;">Composition: Comp 1</span>
 <div class="a" style="left:302px;top:-8px;width:12px;height:14px;background:#b9b9b9;border:1px solid #555;border-radius:3px;"></div>
 <svg class="a" style="left:305px;top:1px" width="7" height="4" viewBox="0 0 7 4"><path d="M0 0h7L3.500 4z" fill="#222"/></svg>
 <span class="t" style="left:319px;top:-7px;font-weight:bold;">x</span>
 <div class="a" style="left:336px;top:0;width:310px;height:6px;background:#8b8b8b;border-radius:0 0 0 6px;"></div>
 <span class="t" style="left:366px;top:-7px;color:#222;">Layer: (none)</span>
 <div class="a" style="left:0;top:6px;width:160px;height:1px;background:#bcbcbc;"></div>
 <div class="a" style="left:344px;top:6px;width:300px;height:1px;background:#bcbcbc;"></div>
 <div class="a" style="left:0;top:7px;width:644px;height:1px;background:#a8a8a8;"></div>
</div>
<!-- comp footer -->
<style>
.dd{position:absolute;top:400px;height:16px;box-sizing:border-box;border:1px solid #6a6a6a;border-radius:4px;background:linear-gradient(#d2d2d2,#b9b9b9 55%,#a5a5a5);}
.dd i{position:absolute;top:0;bottom:0;width:1px;background:#6a6a6a;}
.dd svg{position:absolute;top:4px;}
.dd span{position:absolute;left:4px;top:0px;line-height:14px;font-size:11px;color:#111;white-space:nowrap;}
</style>
<svg class="a" style="left:368px;top:401px" width="15" height="12" viewBox="0 0 15 12"><rect x="0.500" y="0.500" width="14" height="11" rx="1.500" fill="#e4e4e4" stroke="#333"/><rect x="3" y="3" width="9" height="5" fill="#333"/></svg>
<div class="dd" style="left:386px;width:65px;"><span>50%</span><i style="left:48px"></i><svg style="left:52px" width="9" height="7" viewBox="0 0 9 7"><path d="M0 0h9L4.500 7z" fill="#111"/></svg></div>
<svg class="a" style="left:453px;top:401px" width="17" height="14" viewBox="0 0 17 14"><rect x="3.500" y="3.500" width="10" height="7" fill="none" stroke="#222"/><path d="M0 5.500h3M14 5.500h3M0 8.500h3M14 8.500h3M6.500 0v3M10.500 0v3M6.500 11v3M10.500 11v3" stroke="#222"/></svg>
<div class="a" style="left:472px;top:400px;width:18px;height:16px;background:#e6e6e6;border:1px solid #555;border-radius:3px;box-sizing:border-box;"></div>
<svg class="a" style="left:475px;top:402px" width="12" height="11" viewBox="0 0 12 11"><rect x="1" y="1" width="10" height="9" rx="2" fill="none" stroke="#111" stroke-width="1.400" stroke-dasharray="2.500 1.500"/></svg>
<div class="dd" style="left:492px;width:69px;"><span style="left:6px">0:00:00:00</span></div>
<svg class="a" style="left:564px;top:401px" width="15" height="13" viewBox="0 0 15 13"><rect x="0.500" y="2.500" width="14" height="9" fill="#ddd" stroke="#222"/><circle cx="7.500" cy="7" r="2.500" fill="#888" stroke="#222"/><rect x="9" y="0.500" width="4" height="2" fill="#222"/></svg>
<svg class="a" style="left:585px;top:400px" width="14" height="16" viewBox="0 0 14 16"><circle cx="7" cy="3.500" r="3" fill="#bcbcbc" stroke="#999"/><path d="M1 15V9q0-2.500 3-2.500h6q3 0 3 2.500v6z" fill="#bcbcbc" stroke="#999"/></svg>
<svg class="a" style="left:603px;top:400px" width="17" height="16" viewBox="0 0 17 16"><circle cx="8" cy="5" r="4.300" fill="#d03030" stroke="#611"/><circle cx="5" cy="10" r="4.300" fill="#30a040" stroke="#151"/><circle cx="11" cy="10" r="4.300" fill="#3050d0" stroke="#115"/><path d="M13 15h4v-3z" fill="#111"/></svg>
<div class="dd" style="left:621px;width:62px;"><span>Full</span><i style="left:45px"></i><svg style="left:49px" width="9" height="7" viewBox="0 0 9 7"><path d="M0 0h9L4.500 7z" fill="#111"/></svg></div>
<svg class="a" style="left:687px;top:402px" width="14" height="11" viewBox="0 0 14 11"><rect x="0.500" y="0.500" width="13" height="10" fill="#ccc" stroke="#333"/><rect x="3.500" y="3.500" width="7" height="4" fill="#eee" stroke="#333"/></svg>
<svg class="a" style="left:706px;top:402px" width="13" height="11" viewBox="0 0 13 11"><rect width="13" height="11" fill="#eee"/><path d="M0 0h3v3H0zM6 0h3v3H6zM3 3h3v3H3zM9 3h3v3H9zM0 6h3v3H0zM6 6h3v3H6zM3 9h3v2H3zM9 9h3v2H9z" fill="#555"/></svg>
<div class="dd" style="left:724px;width:101px;"><span style="letter-spacing:-0.3px">Active Camera</span><i style="left:85px"></i><svg style="left:88px" width="9" height="7" viewBox="0 0 9 7"><path d="M0 0h9L4.500 7z" fill="#111"/></svg></div>
<div class="dd" style="left:829px;width:60px;"><span style="letter-spacing:-0.3px">1 View</span><i style="left:44px"></i><svg style="left:47px" width="9" height="7" viewBox="0 0 9 7"><path d="M0 0h9L4.500 7z" fill="#111"/></svg></div>
<div class="a" style="left:892px;top:400px;width:18px;height:16px;background:#e6e6e6;border:1px solid #555;border-radius:3px;box-sizing:border-box;"></div>
<svg class="a" style="left:894px;top:401px" width="14" height="13" viewBox="0 0 14 13"><rect x="1.500" y="4.500" width="11" height="7" fill="#ddd" stroke="#222"/><path d="M1 2.500h12M1.500 0.500v4M12.500 0.500v4" stroke="#222"/></svg>
<div class="a" style="left:912px;top:400px;width:18px;height:16px;background:#e0e0e0;border:1px solid #333;border-radius:3px;box-sizing:border-box;"></div>
<svg class="a" style="left:914px;top:401px" width="14" height="13" viewBox="0 0 14 13"><rect x="1.500" y="1.500" width="11" height="9" fill="#444" stroke="#111"/><path d="M7 2.500l-2.500 4h2L6 10l3-4.500H7z" fill="#fff"/></svg>
<svg class="a" style="left:933px;top:402px" width="15" height="12" viewBox="0 0 15 12"><path d="M0.500 2.500q3.500-2 7 0q3.500-2 7 0v8q-3.500-2-7 0q-3.500-2-7 0z" fill="#ddd" stroke="#222"/><path d="M7.500 2.500v8" stroke="#222"/><path d="M2 4v5M4 3.500v5M11 3.500v5M13 4v5" stroke="#666"/></svg>
<svg class="a" style="left:953px;top:400px" width="15" height="15" viewBox="0 0 15 15"><path d="M7.500 4v3M2.500 10V7.500h10V10" fill="none" stroke="#222"/><rect x="5.500" y="0.500" width="4" height="4" fill="#ddd" stroke="#222"/><rect x="0.500" y="10.500" width="4" height="4" fill="#ddd" stroke="#222"/><rect x="10.500" y="10.500" width="4" height="4" fill="#ddd" stroke="#222"/></svg>


<!-- white note -->
<div class="a" id="note" style="left:2px;top:212px;width:492px;height:143px;background:#fff;"></div>
<!--NOTE_S-->
<style>.nl{position:absolute;left:5px;height:44px;white-space:nowrap;color:#d20f18;display:flex;align-items:flex-end;}
.nl b{display:block;width:37.3px;text-align:center;font:900 33px/44px "Liberation Sans","Noto Sans CJK SC","Noto Serif CJK SC",sans-serif;transform:translateY(-2.6px) scale(1,.67);transform-origin:50% 78%;flex:none;}
.nl i{display:block;width:18.65px;text-align:center;font:normal 32px/44px "Liberation Serif",serif;flex:none;-webkit-text-stroke:0.4px #d20f18;}
</style>
<div class="nl" style="top:215.5px"><i>3</i><b>、</b><b>添</b><b>加</b><i style="transform:scaleX(.78)">H</i><i style="transform:scaleX(.78)">U</i><i>e</i><i>/</i><i>S</i><i>a</i><i>t</i><i>u</i><i>r</i><i>a</i><i>t</i><i>i</i><i>o</i><i>n</i><b>效</b><b>果</b></div>
<div class="nl" style="top:259.5px"><b>给</b><b>层</b><b>上</b><b>色</b><b>。</b><b>设</b><b>置</b><b>如</b><b>图</b><b>。</b><b>想</b><b>要</b><b>什</b></div>
<div class="nl" style="top:304.5px"><b>么</b><b>颜</b><b>色</b><b>自</b><b>己</b><b>调</b></div>
<!--NOTE_E-->

<!-- divider -->
<div class="a" id="hdiv" style="left:0;top:418px;width:1010px;height:28px;background:linear-gradient(#565656,#6e6e6e 40%,#9a9a9a);"></div>
<!--TL_S-->
<style>
.tr{position:absolute;left:0;width:673px;height:17px;background:#bbbbbb;border-top:1px solid #d0d0d0;box-sizing:border-box;}
.tt{position:absolute;white-space:nowrap;line-height:14px;font-size:11px;color:#141414;}
.lk{position:absolute;white-space:nowrap;line-height:12px;font-size:11px;color:#1b3d9e;border-bottom:1px dotted #1b3d9e;}
.kf{position:absolute;left:677.5px;width:8px;height:13px;}
</style>
<svg class="a" style="left:0;top:423px" width="140" height="22" viewBox="0 0 140 22"><path d="M4.500 22 V10 Q4.500 4.500 10 4.500 H106 Q112 4.500 115 8 L124 18 Q126.500 20.500 131 20.500 H140 V22 Z" fill="#adadad" stroke="#cdcdcd"/></svg>
<div class="a" style="left:128px;top:443px;width:882px;height:1px;background:#c8c8c8;"></div>
<div class="a" style="left:0;top:444px;width:1010px;height:35px;background:#a9a9a9;"></div>
<svg class="a" style="left:7px;top:429px" width="6" height="14" viewBox="0 0 6 14"><path d="M1 1h1M4 2h1M1 4h1M4 5h1M1 7h1M4 8h1M1 10h1M4 11h1" stroke="#ddd" stroke-width="1.500"/></svg>
<span class="tt" style="left:17px;top:429px;font-size:11px;letter-spacing:-0.3px;">Timeline: Comp 1</span>
<svg class="a" style="left:110px;top:432px" width="9" height="9" viewBox="0 0 9 9"><path d="M1.500 1.500l6 6M7.500 1.500l-6 6" stroke="#111" stroke-width="1.800"/></svg>
<span class="a" style="left:11px;top:452px;font-size:17px;line-height:19px;letter-spacing:0.3px;color:#1b4fb4;-webkit-text-stroke:0.3px #1b4fb4;border-bottom:1px dotted #1b4fb4;height:17px;white-space:nowrap;">0:00:00:00</span>
<span class="tt" style="left:112px;top:456px;font-size:11.500px;">(25.00 fps)</span>
<div class="a" style="left:497px;top:451px;width:24px;height:20px;background:#d9d9d9;border:1px solid #777;border-radius:3px;box-sizing:border-box;"></div>
<svg class="a" style="left:500px;top:453px" width="18" height="16" viewBox="0 0 18 16"><rect x="0.500" y="0.500" width="12" height="11" fill="#eee" stroke="#222"/><rect x="5.500" y="4.500" width="11" height="10" fill="none" stroke="#222"/><path d="M2 2l8 8M10 2l-8 8" stroke="#222"/><rect x="3" y="3" width="7" height="6" fill="none" stroke="#222"/></svg>
<svg class="a" style="left:524px;top:453px" width="18" height="17" viewBox="0 0 18 17"><path d="M1 5l7-3 7 3v8l-7 3-7-3z" fill="#d5d5d5" stroke="#bbb"/><path d="M9 8l6-2v7l-6 3z" fill="#777"/><path d="M9 8v8" stroke="#555"/></svg>
<svg class="a" style="left:555px;top:452px" width="23" height="19" viewBox="0 0 23 19"><path d="M4 12Q4 2 11.500 2T19 12z" fill="#ddd" stroke="#222"/><rect x="0.500" y="12.500" width="22" height="4" fill="#ccc" stroke="#222"/><path d="M6 8h5v4H6z" fill="#333"/></svg>
<svg class="a" style="left:582px;top:452px" width="22" height="19" viewBox="0 0 22 19"><rect x="0.500" y="4.500" width="13" height="12" fill="#bbb" stroke="#222"/><rect x="8.500" y="0.500" width="13" height="14" fill="#ddd" stroke="#222"/><path d="M2.500 5v12M5 5v12M10.500 1v14M19.500 1v14" stroke="#222" stroke-dasharray="2 1.500"/><rect x="12.500" y="3.500" width="5" height="8" fill="#666"/></svg>
<svg class="a" style="left:607px;top:452px" width="20" height="19" viewBox="0 0 20 19"><defs><radialGradient id="bl" cx=".4" cy=".35" r=".7"><stop offset="0" stop-color="#fff"/><stop offset="1" stop-color="#999"/></radialGradient></defs><path d="M2 17L12 6" stroke="#888" stroke-width="5" stroke-linecap="round" opacity=".6"/><circle cx="13" cy="7" r="5.500" fill="url(#bl)" stroke="#777"/></svg>
<svg class="a" style="left:639px;top:454px" width="24" height="16" viewBox="0 0 24 16"><path d="M2 2.500h20M2 13.500h20" stroke="#333" stroke-dasharray="2 1.500"/><path d="M3 3C10 3 12 13 21 13" fill="none" stroke="#111" stroke-width="1.300"/><path d="M3.500 1v14M20.500 1v14" stroke="#555" stroke-dasharray="1.500 1.500"/></svg>
<div class="a" style="left:0;top:478px;width:673px;height:1px;background:#808080;"></div>
<div class="a" style="left:0;top:479px;width:673px;height:20px;background:linear-gradient(#cbcbcb,#b4b4b4 55%,#a6a6a6);border-top:1px solid #d6d6d6;border-bottom:1px solid #7e7e7e;box-sizing:border-box;"></div>
<div class="a" style="left:66px;top:480px;width:1px;height:18px;background:#8d8d8d;"></div><div class="a" style="left:67px;top:480px;width:1px;height:18px;background:#d4d4d4;"></div>
<div class="a" style="left:97px;top:480px;width:1px;height:18px;background:#8d8d8d;"></div><div class="a" style="left:98px;top:480px;width:1px;height:18px;background:#d4d4d4;"></div>
<div class="a" style="left:130px;top:480px;width:1px;height:18px;background:#8d8d8d;"></div><div class="a" style="left:131px;top:480px;width:1px;height:18px;background:#d4d4d4;"></div>
<div class="a" style="left:261px;top:480px;width:1px;height:18px;background:#8d8d8d;"></div><div class="a" style="left:262px;top:480px;width:1px;height:18px;background:#d4d4d4;"></div>
<div class="a" style="left:397px;top:480px;width:1px;height:18px;background:#8d8d8d;"></div><div class="a" style="left:398px;top:480px;width:1px;height:18px;background:#d4d4d4;"></div>
<div class="a" style="left:539px;top:480px;width:1px;height:18px;background:#8d8d8d;"></div><div class="a" style="left:540px;top:480px;width:1px;height:18px;background:#d4d4d4;"></div>
<div class="a" style="left:657px;top:480px;width:1px;height:18px;background:#8d8d8d;"></div><div class="a" style="left:658px;top:480px;width:1px;height:18px;background:#d4d4d4;"></div>
<span class="tt" style="left:104px;top:482px;">#</span>
<span class="tt" style="left:136px;top:482px;letter-spacing:-0.3px;">Source Name</span>
<span class="tt" style="left:403px;top:482px;">Mode</span>
<span class="tt" style="left:466px;top:482px;">T</span>
<span class="tt" style="left:483px;top:482px;">TrkMat</span>
<span class="tt" style="left:545px;top:482px;">Parent</span>
<svg class="a" style="left:3px;top:484px" width="12" height="9" viewBox="0 0 12 9"><path d="M0.500 4.500Q6 -1.500 11.500 4.500Q6 10.500 0.500 4.500z" fill="#ddd" stroke="#333"/><circle cx="6" cy="4.500" r="2.200" fill="#333"/></svg>
<svg class="a" style="left:19px;top:482px" width="13" height="13" viewBox="0 0 13 13"><path d="M1 4.500h3l4-3.500v11l-4-3.500H1z" fill="#ddd" stroke="#333"/><path d="M9.500 3.500q2 3 0 6M11 2q3 4.500 0 9" fill="none" stroke="#555"/></svg>
<svg class="a" style="left:35px;top:484px" width="10" height="10" viewBox="0 0 10 10"><circle cx="5" cy="5" r="4" fill="#e8e8e8" stroke="#999"/></svg>
<svg class="a" style="left:49px;top:482px" width="11" height="13" viewBox="0 0 11 13"><path d="M3 6V4q0-2.500 2.500-2.500T8 4v2" fill="none" stroke="#222" stroke-width="1.300"/><rect x="1.500" y="6.500" width="8" height="6" fill="#ddd" stroke="#222"/></svg>
<svg class="a" style="left:79px;top:480px" width="17" height="17" viewBox="0 0 17 17"><path d="M3 10 L10 3 L13 3 L14 6 L7 13 Z" fill="#ddd" stroke="#444" stroke-width="1"/><circle cx="11.500" cy="5.500" r="1" fill="#444"/><path d="M3 13 L1 15" stroke="#444"/></svg>
<svg class="a" style="left:266px;top:484px" width="11" height="10" viewBox="0 0 11 10"><path d="M1 3.500h9M2 3.500q0 3 3.500 3t3.500-3M5.500 6.500v2" fill="none" stroke="#222"/><rect x="3" y="1.500" width="5" height="2.500" fill="#eee" stroke="#222"/></svg>
<svg class="a" style="left:281px;top:483px" width="12" height="12" viewBox="0 0 13 13"><circle cx="6.500" cy="6.500" r="2.500" fill="#eee" stroke="#222"/><path d="M6.500 0.500v3M6.500 9.500v3M0.500 6.500h3M9.500 6.500h3M2.200 2.200l2 2M8.800 8.800l2 2M10.800 2.200l-2 2M2.200 10.800l2-2" stroke="#222"/></svg>
<svg class="a" style="left:297px;top:483px" width="11" height="11" viewBox="0 0 11 11"><path d="M1 1l9 9" stroke="#222" stroke-width="1.500"/></svg>
<svg class="a" style="left:312px;top:482px" width="12" height="12" viewBox="0 0 12 12"><circle cx="6" cy="6" r="5.500" fill="#222"/><path d="M8.500 2.500q-2.500-1-3 2l-1 5q-.3 1.500-1.800 1M3.500 5.500h4.500" fill="none" stroke="#fff" stroke-width="1.400"/></svg>
<svg class="a" style="left:326px;top:482px" width="13" height="13" viewBox="0 0 13 13"><rect x="0.500" y="0.500" width="12" height="12" fill="#ddd" stroke="#222"/><path d="M2.500 1v11M10.500 1v11" stroke="#222" stroke-width="2" stroke-dasharray="1.500 1.500"/><rect x="4.500" y="3" width="4" height="7" fill="#555"/></svg>
<svg class="a" style="left:342px;top:482px" width="13" height="13" viewBox="0 0 13 13"><circle cx="8" cy="5" r="4" fill="#eee" stroke="#888"/><path d="M1.500 11.500L6 7" stroke="#999" stroke-width="3" stroke-linecap="round"/></svg>
<svg class="a" style="left:357px;top:482px" width="13" height="13" viewBox="0 0 13 13"><circle cx="6.500" cy="6.500" r="5.500" fill="#eee" stroke="#222"/><path d="M2.600 10.400A5.500 5.500 0 0 0 10.400 2.600z" fill="#222"/></svg>
<svg class="a" style="left:371px;top:482px" width="13" height="13" viewBox="0 0 14 14"><path d="M1 4l6-3 6 3v6l-6 3-6-3z" fill="#eee" stroke="#555"/><path d="M1 4l6 3 6-3M7 7v6" fill="none" stroke="#555"/></svg>
<div class="a" style="left:0;top:499px;width:673px;height:17px;background:#8f8f8f;"></div>
<div class="a" style="left:17px;top:500px;width:3px;height:15px;background:#a0a0a0;"></div>
<div class="a" style="left:33px;top:500px;width:3px;height:15px;background:#a0a0a0;"></div>
<div class="a" style="left:48px;top:500px;width:3px;height:15px;background:#a0a0a0;"></div>
<div class="a" style="left:61px;top:500px;width:3px;height:15px;background:#a0a0a0;"></div>
<div class="a" style="left:281px;top:501px;width:2px;height:13px;background:#a2a2a2;"></div>
<div class="a" style="left:295px;top:501px;width:2px;height:13px;background:#a2a2a2;"></div>
<div class="a" style="left:327px;top:501px;width:2px;height:13px;background:#a2a2a2;"></div>
<div class="a" style="left:341px;top:501px;width:2px;height:13px;background:#a2a2a2;"></div>
<div class="a" style="left:355px;top:501px;width:2px;height:13px;background:#a2a2a2;"></div>
<div class="a" style="left:370px;top:501px;width:2px;height:13px;background:#a2a2a2;"></div>
<div class="a" style="left:384px;top:501px;width:2px;height:13px;background:#a2a2a2;"></div>
<svg class="a" style="left:3px;top:503px" width="12" height="9" viewBox="0 0 12 9"><path d="M0.500 4.500Q6 -1.500 11.500 4.500Q6 10.500 0.500 4.500z" fill="#bbb" stroke="#444"/><circle cx="6" cy="4.500" r="2.200" fill="#333"/></svg>
<svg class="a" style="left:69px;top:504px" width="11" height="8" viewBox="0 0 11 8"><path d="M1 1h9L5.500 7z" fill="#e6e6e6" stroke="#666"/></svg>
<div class="a" style="left:84px;top:502px;width:12px;height:11px;background:#f0a596;border:1px solid #b77;box-sizing:border-box;"></div>
<span class="tt" style="left:104px;top:500px;font-weight:bold;">1</span>
<div class="a" style="left:134px;top:501px;width:14px;height:13px;background:#000;"></div>
<div class="a" style="left:150px;top:500px;width:111px;height:15px;background:#878787;border:1px solid #4a4a4a;box-sizing:border-box;"></div>
<span class="tt" style="left:153px;top:500px;font-weight:bold;font-size:11px;color:#000;font-family:'Liberation Sans','Noto Sans CJK SC',sans-serif;">光效A</span>
<svg class="a" style="left:266px;top:503px" width="11" height="10" viewBox="0 0 11 10"><path d="M1 3.500h9M2 3.500q0 3 3.500 3t3.500-3M5.500 6.500v2" fill="none" stroke="#222"/><rect x="3" y="1.500" width="5" height="2.500" fill="#eee" stroke="#222"/></svg>
<svg class="a" style="left:297px;top:501px" width="13" height="13" viewBox="0 0 13 13"><path d="M1 12L12 1" stroke="#111" stroke-width="1.600"/></svg>
<svg class="a" style="left:312px;top:501px" width="12" height="12" viewBox="0 0 12 12"><circle cx="6" cy="6" r="5.500" fill="#222"/><path d="M8.500 2.500q-2.500-1-3 2l-1 5q-.3 1.500-1.800 1M3.500 5.500h4.500" fill="none" stroke="#fff" stroke-width="1.400"/></svg>
<div class="dd" style="left:401px;top:500px;width:57px;height:15px;"><span style="top:-1px">Normal</span><i style="left:43px"></i><svg style="left:46px;top:4px" width="8" height="6" viewBox="0 0 8 6"><path d="M0 0h8L4 6z" fill="#111"/></svg></div>
<div class="a" style="left:464px;top:501px;width:14px;height:13px;background:#a9a9a9;border:1px solid #8c8c8c;box-sizing:border-box;"></div>
<svg class="a" style="left:547px;top:502px" width="11" height="11" viewBox="0 0 11 11"><circle cx="5.500" cy="5.500" r="4.500" fill="none" stroke="#333"/><path d="M5.500 5.500a2 2 0 1 1 2 2" fill="none" stroke="#333"/></svg>
<div class="dd" style="left:563px;top:500px;width:91px;height:15px;"><span style="top:-1px">None</span><i style="left:76px"></i><svg style="left:80px;top:4px" width="8" height="6" viewBox="0 0 8 6"><path d="M0 0h8L4 6z" fill="#111"/></svg></div>
<div class="tr" style="top:515px;height:17px"></div>
<span class="tt" style="left:104px;top:517px;letter-spacing:-0.2px;color:#141414">Effects</span>
<svg class="a" style="left:86px;top:521px" width="11" height="8" viewBox="0 0 11 8"><path d="M1 1.500 L10 1.500 L5.500 7 Z" fill="#c9c9c9" stroke="#555"/></svg>
<div class="tr" style="top:532px;height:17px"></div>
<span class="tt" style="left:121px;top:534px;letter-spacing:-0.2px;color:#141414">Fractal Noise</span>
<span class="lk" style="left:268px;top:535px">Reset</span>
<svg class="a" style="left:105px;top:536px" width="8" height="11" viewBox="0 0 8 11"><path d="M1.500 1 L6.500 5.500 L1.500 10 Z" fill="#c9c9c9" stroke="#555"/></svg>
<svg class="a" style="left:4px;top:535px" width="12" height="12" viewBox="0 0 12 12"><circle cx="6" cy="6" r="5.500" fill="#222"/><path d="M8.500 2.500q-2.500-1-3 2l-1 5q-.3 1.500-1.800 1M3.500 5.500h4.500" fill="none" stroke="#fff" stroke-width="1.400"/></svg>
<div class="tr" style="top:549px;height:17px"></div>
<span class="tt" style="left:121px;top:551px;letter-spacing:-0.2px;color:#141414">Directional Blur</span>
<span class="lk" style="left:268px;top:552px">Reset</span>
<svg class="a" style="left:105px;top:553px" width="8" height="11" viewBox="0 0 8 11"><path d="M1.500 1 L6.500 5.500 L1.500 10 Z" fill="#c9c9c9" stroke="#555"/></svg>
<svg class="a" style="left:4px;top:552px" width="12" height="12" viewBox="0 0 12 12"><circle cx="6" cy="6" r="5.500" fill="#222"/><path d="M8.500 2.500q-2.500-1-3 2l-1 5q-.3 1.500-1.800 1M3.500 5.500h4.500" fill="none" stroke="#fff" stroke-width="1.400"/></svg>
<div class="tr" style="top:566px;height:17px"></div>
<div class="a" style="left:119px;top:567px;width:143px;height:16px;background:#464646;"></div>
<span class="tt" style="left:121px;top:568px;letter-spacing:-0.2px;color:#fff">Hue/Saturation</span>
<span class="lk" style="left:268px;top:569px">Reset</span>
<svg class="a" style="left:103px;top:572px" width="11" height="8" viewBox="0 0 11 8"><path d="M1 1.500 L10 1.500 L5.500 7 Z" fill="#c9c9c9" stroke="#555"/></svg>
<svg class="a" style="left:4px;top:569px" width="12" height="12" viewBox="0 0 12 12"><circle cx="6" cy="6" r="5.500" fill="#222"/><path d="M8.500 2.500q-2.500-1-3 2l-1 5q-.3 1.500-1.800 1M3.500 5.500h4.500" fill="none" stroke="#fff" stroke-width="1.400"/></svg>
<div class="tr" style="top:583px;height:17px"></div>
<span class="tt" style="left:139px;top:585px;letter-spacing:-0.2px;color:#141414">Channel Control</span>
<div class="a" style="left:124px;top:592px;width:2px;height:2px;background:#8f8f8f;"></div>
<div class="tr" style="top:600px;height:17px"></div>
<span class="tt" style="left:155px;top:602px;letter-spacing:-0.2px;color:#141414">Channel Range</span>
<div class="a" style="left:124px;top:609px;width:2px;height:2px;background:#8f8f8f;"></div>
<svg class="a" style="left:138px;top:604px" width="10" height="12" viewBox="0 0 10 12"><circle cx="5" cy="6.500" r="3.800" fill="#e6e6e6" stroke="#555"/><path d="M5 6.500V4M3.500 1.500h3M5 1.500v1.500M8 3l1-1" stroke="#444" fill="none"/></svg>
<div class="tr" style="top:617px;height:17px"></div>
<span class="tt" style="left:139px;top:619px;letter-spacing:-0.2px;color:#141414">Colorize</span>
<span class="lk" style="left:267px;top:620px">On</span>
<div class="a" style="left:124px;top:626px;width:2px;height:2px;background:#8f8f8f;"></div>
<div class="tr" style="top:634px;height:17px"></div>
<span class="tt" style="left:155px;top:636px;letter-spacing:-0.2px;color:#141414">Colorize Hue</span>
<span class="lk" style="left:267px;top:637px">0 x +0.0 °</span>
<div class="a" style="left:124px;top:643px;width:2px;height:2px;background:#8f8f8f;"></div>
<svg class="a" style="left:138px;top:638px" width="10" height="12" viewBox="0 0 10 12"><circle cx="5" cy="6.500" r="3.800" fill="#e6e6e6" stroke="#555"/><path d="M5 6.500V4M3.500 1.500h3M5 1.500v1.500M8 3l1-1" stroke="#444" fill="none"/></svg>
<div class="tr" style="top:651px;height:17px"></div>
<div class="a" style="left:152px;top:652px;width:110px;height:16px;background:#464646;"></div>
<span class="tt" style="left:155px;top:653px;letter-spacing:-0.2px;color:#fff">Colorize Saturation</span>
<span class="lk" style="left:267px;top:654px">66</span>
<div class="a" style="left:124px;top:660px;width:2px;height:2px;background:#8f8f8f;"></div>
<svg class="a" style="left:138px;top:655px" width="10" height="12" viewBox="0 0 10 12"><circle cx="5" cy="6.500" r="3.800" fill="#e6e6e6" stroke="#555"/><path d="M5 6.500V4M3.500 1.500h3M5 1.500v1.500M8 3l1-1" stroke="#444" fill="none"/></svg>
<div class="tr" style="top:668px;height:17px"></div>
<span class="tt" style="left:155px;top:670px;letter-spacing:-0.2px;color:#141414">Colorize Lightness</span>
<span class="lk" style="left:267px;top:671px">0</span>
<div class="a" style="left:124px;top:677px;width:2px;height:2px;background:#8f8f8f;"></div>
<svg class="a" style="left:138px;top:672px" width="10" height="12" viewBox="0 0 10 12"><circle cx="5" cy="6.500" r="3.800" fill="#e6e6e6" stroke="#555"/><path d="M5 6.500V4M3.500 1.500h3M5 1.500v1.500M8 3l1-1" stroke="#444" fill="none"/></svg>
<div class="tr" style="top:685px;height:17px"></div>
<span class="tt" style="left:121px;top:687px;letter-spacing:-0.2px;color:#141414">Glow</span>
<span class="lk" style="left:268px;top:688px">Reset</span>
<span class="lk" style="left:303px;top:688px">Options...</span>
<svg class="a" style="left:105px;top:689px" width="8" height="11" viewBox="0 0 8 11"><path d="M1.500 1 L6.500 5.500 L1.500 10 Z" fill="#c9c9c9" stroke="#555"/></svg>
<div class="a" style="left:3px;top:687px;width:14px;height:13px;background:#bcbcbc;border:1px solid #a3a3a3;box-sizing:border-box;"></div>
<div class="tr" style="top:702px;height:15px"></div>
<span class="tt" style="left:121px;top:704px;letter-spacing:-0.2px;color:#141414">Polar Coordinates</span>
<span class="lk" style="left:268px;top:705px">Reset</span>
<svg class="a" style="left:105px;top:706px" width="8" height="11" viewBox="0 0 8 11"><path d="M1.500 1 L6.500 5.500 L1.500 10 Z" fill="#c9c9c9" stroke="#555"/></svg>
<div class="a" style="left:3px;top:704px;width:14px;height:13px;background:#bcbcbc;border:1px solid #a3a3a3;box-sizing:border-box;"></div>
<div class="dd" style="left:266px;top:585px;width:97px;height:14px;"><span style="top:-1px;line-height:13px">Master</span><i style="left:83px"></i><svg style="left:86px;top:3px" width="8" height="6" viewBox="0 0 8 6"><path d="M0 0h8L4 6z" fill="#111"/></svg></div>
<div class="a" style="left:673px;top:445px;width:337px;height:272px;background:#a9a9a9;"></div>
<div class="a" style="left:674px;top:449px;width:336px;height:10px;background:linear-gradient(#cfcfcf,#b4b4b4);border-top:1px solid #2a2a2a;border-bottom:1px solid #2a2a2a;box-sizing:border-box;"></div>
<div class="a" style="left:674px;top:449px;width:6px;height:10px;background:linear-gradient(#6fa8dc,#2f6fb0);border-radius:3px 0 0 3px;"></div>
<div class="a" style="left:674px;top:459px;width:336px;height:20px;background:linear-gradient(#bdbdbd,#b0b0b0);border-bottom:1px solid #222;box-sizing:border-box;"></div>
<span class="tt" style="left:683px;top:460px;font-size:9.800px;letter-spacing:-0.2px;">0s</span>
<span class="tt" style="left:746px;top:460px;font-size:9.800px;letter-spacing:-0.2px;">05s</span>
<div class="a" style="left:754px;top:472px;width:1px;height:6px;background:#222;"></div>
<span class="tt" style="left:819px;top:460px;font-size:9.800px;letter-spacing:-0.2px;">10s</span>
<div class="a" style="left:827px;top:472px;width:1px;height:6px;background:#222;"></div>
<span class="tt" style="left:892px;top:460px;font-size:9.800px;letter-spacing:-0.2px;">15s</span>
<div class="a" style="left:900px;top:472px;width:1px;height:6px;background:#222;"></div>
<span class="tt" style="left:965px;top:460px;font-size:9.800px;letter-spacing:-0.2px;">20s</span>
<div class="a" style="left:973px;top:472px;width:1px;height:6px;background:#222;"></div>
<div class="a" style="left:674px;top:479px;width:336px;height:16px;background:linear-gradient(#c9c9c9,#b9b9b9 60%,#aaa);"></div>
<div class="a" style="left:674px;top:480px;width:6px;height:14px;background:linear-gradient(90deg,#7fb2e0,#2f6fb0);border-radius:3px 0 0 3px;"></div>
<div class="a" style="left:674px;top:494px;width:336px;height:4px;background:linear-gradient(#777,#4c4c4c);"></div>
<div class="a" style="left:673px;top:498px;width:7px;height:18px;background:#9d9d9d;"></div>
<div class="a" style="left:680px;top:499px;width:330px;height:16px;background:linear-gradient(#e07a66,#d4503a 25%,#c8422c 75%,#b43a28);"></div>
<div class="a" style="left:676px;top:515px;width:334px;height:202px;background:#d1d1d1;"></div>
<div class="a" style="left:673px;top:499px;width:1px;height:218px;background:#6a6a6a;"></div>
<div class="a" style="left:674px;top:515px;width:2px;height:202px;background:#bdbdbd;"></div>
<div class="a" style="left:824px;top:539px;width:6px;height:6px;border-radius:3px;background:#858585;"></div>
<svg class="kf" style="top:518px" width="8" height="13" viewBox="0 0 8 13"><path d="M0.500 1h7M0.500 12h7" stroke="#6e3a36" stroke-width="1.600"/><path d="M4 1v11" stroke="#7c2c28" stroke-width="3"/></svg>
<svg class="kf" style="top:535px" width="8" height="13" viewBox="0 0 8 13"><path d="M0.500 1h7M0.500 12h7" stroke="#6e3a36" stroke-width="1.600"/><path d="M4 1v11" stroke="#7c2c28" stroke-width="3"/></svg>
<svg class="kf" style="top:552px" width="8" height="13" viewBox="0 0 8 13"><path d="M0.500 1h7M0.500 12h7" stroke="#6e3a36" stroke-width="1.600"/><path d="M4 1v11" stroke="#7c2c28" stroke-width="3"/></svg>
<svg class="kf" style="top:569px" width="8" height="13" viewBox="0 0 8 13"><path d="M0.500 1h7M0.500 12h7" stroke="#6e3a36" stroke-width="1.600"/><path d="M4 1v11" stroke="#7c2c28" stroke-width="3"/></svg>
<svg class="kf" style="top:603px" width="8" height="13" viewBox="0 0 8 13"><path d="M0.500 1h7M0.500 12h7" stroke="#6e3a36" stroke-width="1.600"/><path d="M4 1v11" stroke="#7c2c28" stroke-width="3"/></svg>
<svg class="kf" style="top:637px" width="8" height="13" viewBox="0 0 8 13"><path d="M0.500 1h7M0.500 12h7" stroke="#6e3a36" stroke-width="1.600"/><path d="M4 1v11" stroke="#7c2c28" stroke-width="3"/></svg>
<svg class="kf" style="top:671px" width="8" height="13" viewBox="0 0 8 13"><path d="M0.500 1h7M0.500 12h7" stroke="#6e3a36" stroke-width="1.600"/><path d="M4 1v11" stroke="#7c2c28" stroke-width="3"/></svg>
<svg class="kf" style="top:688px" width="8" height="13" viewBox="0 0 8 13"><path d="M0.500 1h7M0.500 12h7" stroke="#6e3a36" stroke-width="1.600"/><path d="M4 1v11" stroke="#7c2c28" stroke-width="3"/></svg>
<svg class="kf" style="top:705px" width="8" height="13" viewBox="0 0 8 13"><path d="M0.500 1h7M0.500 12h7" stroke="#6e3a36" stroke-width="1.600"/><path d="M4 1v11" stroke="#7c2c28" stroke-width="3"/></svg>
<div class="a" style="left:677px;top:655px;width:9px;height:12px;background:#e8c820;border:1px solid #7a6a10;box-sizing:border-box;"></div>
<div class="a" style="left:681px;top:449px;width:1px;height:268px;background:#c02a22;"></div>
<svg class="a" style="left:675px;top:462px" width="12" height="16" viewBox="0 0 12 13" preserveAspectRatio="none"><path d="M0.500 0.500h11v6L6 12.500 0.500 6.500z" fill="#5a94d6" stroke="#1c3f78"/><path d="M3 3h6M3 5h6" stroke="#cfe2f7"/></svg>
<!--TL_E-->

<!-- bottom bar -->
<div class="a" id="bot" style="left:0;top:717px;width:1010px;height:25px;background:#000;"></div>
<!--BOT_S-->
<svg class="a" style="left:2px;top:717px" width="26" height="25" viewBox="0 0 26 25"><g stroke="#d8121c" stroke-width="3.600" stroke-linecap="round"><path d="M12.500 2v22"/><path d="M3 7l19 11"/><path d="M3 18l19-11"/></g><circle cx="12.500" cy="12.500" r="1.600" fill="#5a0508"/></svg>
<span class="a" style="left:29px;top:720px;font-size:14px;line-height:18px;color:#fff;white-space:nowrap;-webkit-text-stroke:0.35px #fff;">CGpower.com.cn</span>
<!-- watermark logo -->
<svg class="a" style="left:834px;top:686px" width="176" height="56" viewBox="0 0 176 56">
<path d="M1 1H53V54H1Z M11 11V41H43V11Z" fill="#4f9cd8" fill-rule="evenodd" opacity=".92"/>
<rect x="11" y="11" width="32" height="30" fill="#dfe6ec" opacity=".35"/>
<path d="M43 22V11H11V41H43V30" fill="none" stroke="#e2eaf0" stroke-width="5.500" opacity=".8"/>
<path d="M43 22V11H11V41H43V30" fill="none" stroke="#8f9ca8" stroke-width="3.200"/>
<path d="M33 18.500H20.500V33H33.500V25.500H27" fill="none" stroke="#4f9cd8" stroke-width="3.600"/>
<circle cx="26" cy="25.500" r="2.600" fill="#4f9cd8"/>
<path d="M8 6L13 12" stroke="#e8eef4" stroke-width="1.500"/>
<circle cx="8" cy="6" r="3" fill="#eef3f8" stroke="#7f93a6" stroke-width="1"/>
<text x="65" y="33.500" font-family="Liberation Sans, sans-serif" font-weight="bold" font-size="30" fill="#5f9edb" stroke="#5f9edb" stroke-width="0.800">C</text>
<text x="87" y="33.500" font-family="Liberation Sans, sans-serif" font-weight="bold" font-size="30" fill="#6b6b6b" stroke="#6b6b6b" stroke-width="0.800">G</text>
<text x="111" y="32" font-family="Liberation Sans, Noto Sans CJK SC, sans-serif" font-weight="bold" font-size="25.500" fill="#5e5e5e" stroke="#e6e6e6" stroke-width="1" paint-order="stroke" textLength="58" lengthAdjust="spacingAndGlyphs">时代</text>
<text x="59" y="43" font-family="Liberation Sans, sans-serif" font-weight="bold" font-size="9" fill="#7aa0c8" textLength="112" lengthAdjust="spacingAndGlyphs">www.cgtimes.com.cn</text>
<rect x="0" y="31" width="176" height="25" fill="#000" opacity=".62"/>
</svg>
<span class="a" style="left:733px;top:725px;font-size:12.500px;line-height:16px;color:#fff;white-space:nowrap;font-family:'Liberation Sans','Noto Sans CJK SC',sans-serif;text-shadow:0 0 2px #000,0 0 2px #000;">完美动力动画网 rockbang <span style="letter-spacing:0.8px">2007年09月26日提交</span></span>
<!--BOT_E-->

</body></html>
